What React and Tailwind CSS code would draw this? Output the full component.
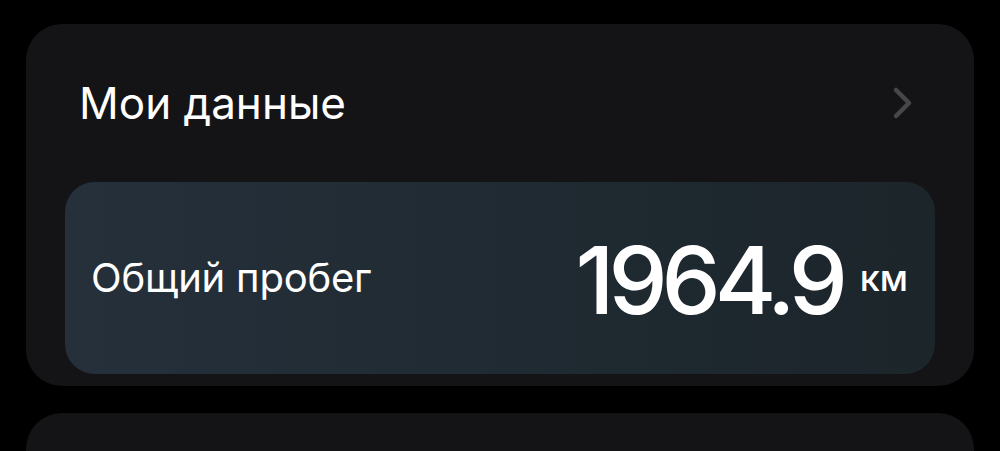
import React from 'react';

const font = { fontFamily: 'Inter, "Noto Sans", sans-serif' };

function Chevron() {
  return (
    <svg width="22" height="34" viewBox="0 0 22 34" fill="none" className="text-[#46464b]">
      <path d="M4 4 L17 17 L4 30" stroke="currentColor" strokeWidth="4.5" strokeLinecap="round" strokeLinejoin="round" />
    </svg>
  );
}

function MileageCard({ label, value, unit }) {
  return (
    <div className="mx-[39px] h-[192px] rounded-[30px] bg-gradient-to-r from-[#25303b] to-[#1b252a] flex items-center justify-between pl-[26px] pr-[27px]">
      <span className="text-[40px] text-white tracking-[-0.005em]">{label}</span>
      <div className="flex items-center gap-[18px]">
        <span className="text-[94px] font-medium text-white leading-none tracking-[-0.065em] pt-[4px]">{value}</span>
        <span className="text-[36px] font-medium text-white">{unit}</span>
      </div>
    </div>
  );
}

export default function App() {
  return (
    <div className="w-[1000px] h-[451px] bg-black overflow-hidden pt-[24px] px-[26px]" style={font}>
      <div className="rounded-[36px] bg-[#141417] pb-[12px]">
        <div className="h-[158px] flex items-center justify-between pl-[53px] pr-[60px]">
          <h2 className="text-[44px] text-white font-normal">Мои данные</h2>
          <Chevron />
        </div>
        <MileageCard label="Общий пробег" value="1964.9" unit="км" />
      </div>
      <div className="mt-[27px] h-[120px] rounded-[36px] bg-[#141417]" />
    </div>
  );
}
